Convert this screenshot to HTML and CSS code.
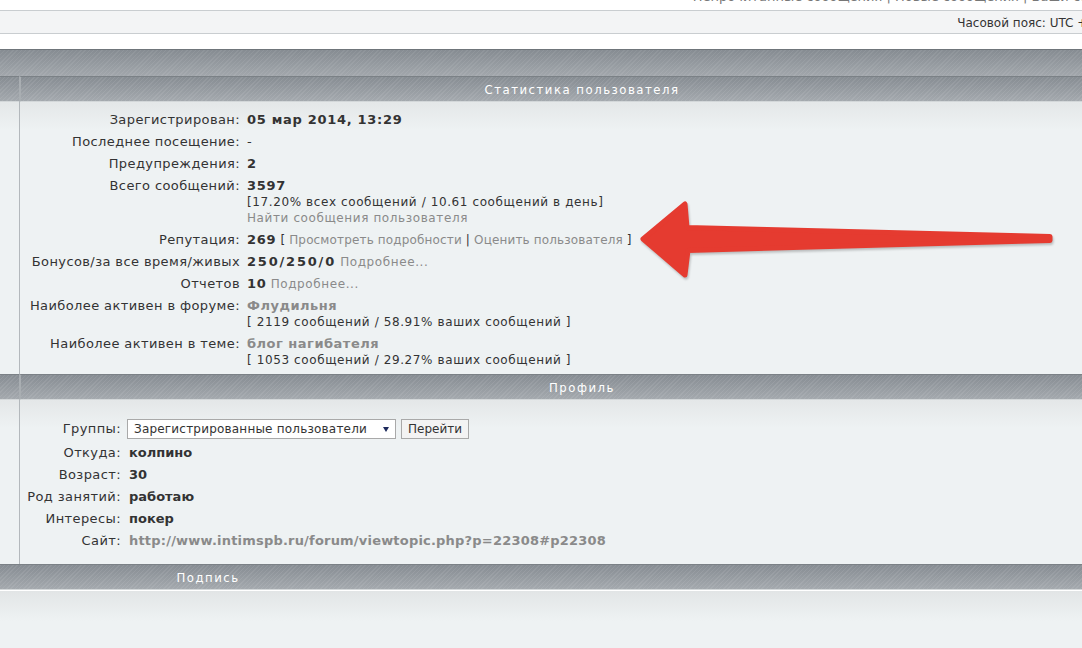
FILE: index.html
```html
<!DOCTYPE html>
<html lang="ru">
<head>
  <meta charset="UTF-8" />
  <title>Профиль пользователя</title>
  <meta name="viewport" content="width=device-width, initial-scale=1.0" />
  <link rel="stylesheet" href="styles.css">
</head>
<body>

<div class="page">
  <div class="toplinks"><span>Непрочитанные сообщения | Новые сообщения | Ваши сообщения</span></div>
  <div class="tzbar">Часовой пояс: UTC + 4 часа</div>

  <div class="band"></div>

  <div class="sheet">
    <div class="hd side"></div>
    <div class="hd main">Статистика пользователя</div>
    <div class="bd side"></div>
    <div class="bd main">
      <dl class="stats">
        <dt>Зарегистрирован:</dt>
        <dd><b>05 мар 2014, 13:29</b></dd>
        <dt>Последнее посещение:</dt>
        <dd>-</dd>
        <dt>Предупреждения:</dt>
        <dd><b>2</b></dd>
        <dt>Всего сообщений:</dt>
        <dd><b>3597</b><br><span class="small">[17.20% всех сообщений / 10.61 сообщений в день]</span><br><a class="small" href="#">Найти сообщения пользователя</a></dd>
        <dt>Репутация:</dt>
        <dd><b>269</b> <span class="small tight">[ <a href="#">Просмотреть подробности</a> | <a href="#">Оценить пользователя</a> ]</span></dd>
        <dt>Бонусов/за все время/живых</dt>
        <dd><b class="wide">250/250/0</b> <a class="small" href="#">Подробнее...</a></dd>
        <dt>Отчетов</dt>
        <dd><b>10</b> <a class="small" href="#">Подробнее...</a></dd>
        <dt>Наиболее активен в форуме:</dt>
        <dd><a class="strong" href="#">Флудильня</a><br><span class="small">[ 2119 сообщений / 58.91% ваших сообщений ]</span></dd>
        <dt>Наиболее активен в теме:</dt>
        <dd><a class="strong" href="#">блог нагибателя</a><br><span class="small">[ 1053 сообщений / 29.27% ваших сообщений ]</span></dd>
      </dl>
    </div>

    <div class="hd side"></div>
    <div class="hd main">Профиль</div>
    <div class="bd side"></div>
    <div class="bd main">
      <dl class="info">
        <dt class="tall">Группы:</dt>
        <dd class="tall">
          <div class="select">Зарегистрированные пользователи<i class="caret"></i></div>
          <div class="btn">Перейти</div>
        </dd>
        <dt>Откуда:</dt>
        <dd><b>колпино</b></dd>
        <dt>Возраст:</dt>
        <dd><b>30</b></dd>
        <dt>Род занятий:</dt>
        <dd><b>работаю</b></dd>
        <dt>Интересы:</dt>
        <dd><b>покер</b></dd>
        <dt>Сайт:</dt>
        <dd><a class="url" href="#">http://www.intimspb.ru/forum/viewtopic.php?p=22308#p22308</a></dd>
      </dl>
    </div>
  </div>

  <div class="hd sig"><span>Подпись</span></div>
  <div class="sigbody"></div>
</div>

<!-- стрелка-пометка поверх скриншота -->
<svg class="arrow" width="1082" height="648" viewBox="0 0 1082 648">
  <polygon points="643,239 685,204 687,227.5 1050,236.5 1050,240.5 688,250.5 685,275"
           fill="#e53b30" stroke="#e53b30" stroke-width="5" stroke-linejoin="round" />
</svg>

</body>
</html>
```

FILE: styles.css
```css
body {
  margin: 0;
  background: #fff;
  color: #333;
  font-family: "DejaVu Sans", Verdana, sans-serif;
  font-size: 13px;
  overflow: hidden;
}
a { color: #8a8a8a; text-decoration: none; }
b { color: #333; }

.page {
  width: 1143px;
}

.toplinks {
  height: 10px;
  overflow: hidden;
  text-align: right;
  margin-right: -6px;
  color: #777;
}
.toplinks span {
  display: block;
  margin-top: -11px;
  line-height: 16px;
}

.tzbar {
  height: 22px;
  line-height: 24px;
  border-top: 1px solid #c9cdd0;
  border-bottom: 1px solid #c9cdd0;
  background: #f3f4f5;
  text-align: right;
  padding-right: 12px;
  font-size: 12px;
  color: #333;
}

.band {
  margin-top: 15px;
  height: 26px;
  border-top: 1px solid #6f757a;
  background:
    repeating-linear-gradient(135deg, rgba(255,255,255,.07) 0 1px, transparent 1px 3px),
    linear-gradient(#868c92, #a2a7ac);
}

.sheet {
  display: grid;
  grid-template-columns: 19px 1fr;
}

.hd {
  height: 24px;
  line-height: 26px;
  border-top: 1px solid #7b8186;
  border-bottom: 1px solid #d3d7d9;
  background:
    repeating-linear-gradient(135deg, rgba(255,255,255,.08) 0 1px, transparent 1px 3px),
    linear-gradient(#878d93, #a4a9ae);
  color: #fff;
  font-family: "DejaVu Sans Condensed", "DejaVu Sans", sans-serif;
  font-size: 13px;
  letter-spacing: 1.5px;
  text-align: center;
}
.hd.main { border-left: 2px solid #a9aeb2; }

.bd {
  background: linear-gradient(#e4e7e8, #eef2f3 28px);
}
.bd.main { border-left: 1px solid #b3b8bc; }

.stats, .info {
  display: grid;
  margin: 0;
}
.stats {
  grid-template-columns: 220px 1fr;
  column-gap: 7px;
  padding: 7px 0 3px;
}
.info {
  grid-template-columns: 101px 1fr;
  column-gap: 8px;
  padding: 16px 0 12px;
}
dt, dd {
  margin: 0;
  padding: 3px 0;
  line-height: 16px;
}
dt {
  text-align: right;
  letter-spacing: 0.4px;
}

.stats b { letter-spacing: 0.7px; }
.stats b.wide { letter-spacing: 1.8px; }
.small {
  font-size: 12px;
  letter-spacing: 0.6px;
}
.small.tight { letter-spacing: 0.15px; }
.strong {
  font-weight: bold;
  letter-spacing: 0.5px;
}
.url {
  font-weight: bold;
  letter-spacing: 0.2px;
}

.tall {
  display: flex;
  align-items: center;
  gap: 5px;
}
dt.tall { justify-content: flex-end; }
dd.tall { margin-left: -2px; }

.select {
  width: 261px;
  height: 18px;
  line-height: 18px;
  padding-left: 6px;
  border: 1px solid #a9a9a9;
  background: #fff;
  font-size: 12px;
  letter-spacing: 0.2px;
  position: relative;
}
.caret {
  position: absolute;
  right: 6px;
  top: 7px;
  border-left: 3px solid transparent;
  border-right: 3px solid transparent;
  border-top: 5px solid #1d2a5c;
}
.btn {
  height: 18px;
  line-height: 18px;
  padding: 0 6px;
  border: 1px solid #a9a9a9;
  background: #f3f3f3;
  font-size: 12px;
}

.hd.sig {
  text-align: left;
}
.hd.sig span {
  display: inline-block;
  width: 416px;
  text-align: center;
}
.sigbody {
  height: 60px;
  border-top: 1px solid #fff;
  background: linear-gradient(#e2e5e6, #eef2f3 30px);
}

.arrow {
  position: absolute;
  left: 0;
  top: 0;
  pointer-events: none;
  filter: drop-shadow(1px 2px 1px rgba(0, 0, 0, .22));
}
```
